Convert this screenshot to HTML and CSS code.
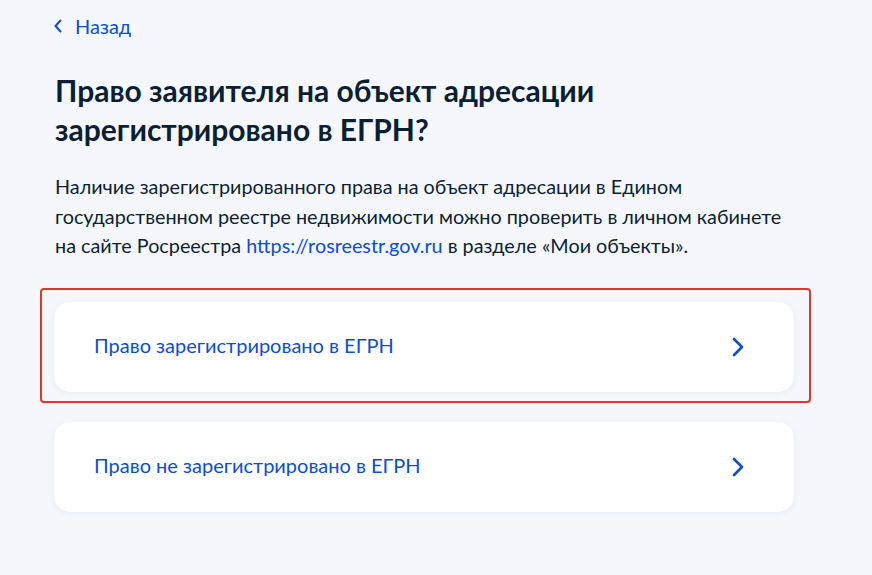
FILE: index.html
```html
<!DOCTYPE html>
<html lang="ru">
<head>
<meta charset="utf-8">
<link rel="stylesheet" href="styles.css">
</head>
<body>
<main class="page">
  <a class="back" href="#">
    <svg class="back-icon" width="8" height="14" viewBox="0 0 8 14"><path d="M6.5 1.5L1.5 7l5 5.5" fill="none" stroke="#0d4cd3" stroke-width="2" stroke-linecap="round" stroke-linejoin="round"/></svg>
    <span>Назад</span>
  </a>
  <h1 class="title">Право заявителя на объект адресации<br>зарегистрировано в ЕГРН?</h1>
  <p class="text">Наличие зарегистрированного права на объект адресации в Едином<br>государственном реестре недвижимости можно проверить в личном кабинете<br>на сайте Росреестра <a class="link" href="#">https://rosreestr.gov.ru</a> в разделе «Мои объекты».</p>
  <div class="options">
    <a class="card card-selected" href="#">
      <span class="card-text">Право зарегистрировано в ЕГРН</span>
      <svg class="chev" width="12" height="20" viewBox="0 0 12 20"><path d="M2 2l8 8-8 8" fill="none" stroke="#0d4cd3" stroke-width="2.6" stroke-linecap="round" stroke-linejoin="round"/></svg>
      <span class="highlight"></span>
    </a>
    <a class="card" href="#">
      <span class="card-text">Право не зарегистрировано в ЕГРН</span>
      <svg class="chev" width="12" height="20" viewBox="0 0 12 20"><path d="M2 2l8 8-8 8" fill="none" stroke="#0d4cd3" stroke-width="2.6" stroke-linecap="round" stroke-linejoin="round"/></svg>
    </a>
  </div>
</main>
</body>
</html>
```
FILE: styles.css
```css
* { box-sizing: border-box; }
html, body { margin: 0; padding: 0; }
body {
  background: #f5f7fc;
  font-family: Lato, "Noto Sans", sans-serif;
  color: #0b1f33;
  width: 872px;
  height: 575px;
  overflow: hidden;
}
.page {
  padding: 14px 0 0 54px;
  width: 818px;
}
.back {
  display: flex;
  align-items: center;
  gap: 13px;
  color: #0d4cd3;
  text-decoration: none;
  font-size: 20px;
  line-height: 24px;
  height: 24px;
}
.back-icon { display: block; margin-left: 0; }
.title {
  margin: 33px 0 0 1px;
  font-size: 30px;
  font-weight: 700;
  line-height: 39px;
  color: #0b1f33;
}
.text {
  margin: 23px 0 0 1px;
  font-size: 19.8px;
  line-height: 29.5px;
  color: #0b1f33;
  white-space: nowrap;
}
.link { color: #0d4cd3; text-decoration: none; }
.options {
  margin-top: 41px;
  display: flex;
  flex-direction: column;
  gap: 30px;
  width: 740px;
}
.card {
  position: relative;
  display: flex;
  align-items: center;
  justify-content: space-between;
  height: 90px;
  padding: 0 50px 0 40px;
  background: #fff;
  border-radius: 16px;
  box-shadow: 0 1px 6px rgba(41, 92, 175, 0.08);
  text-decoration: none;
}
.card-text {
  color: #0d4cd3;
  font-size: 20px;
  line-height: 24px;
  margin-top: -3px;
}
.chev { display: block; }
.highlight {
  position: absolute;
  top: -14px;
  left: -14px;
  right: -17px;
  bottom: -11px;
  border: 2.5px solid #e0372c;
  border-radius: 4px;
  pointer-events: none;
}
```
